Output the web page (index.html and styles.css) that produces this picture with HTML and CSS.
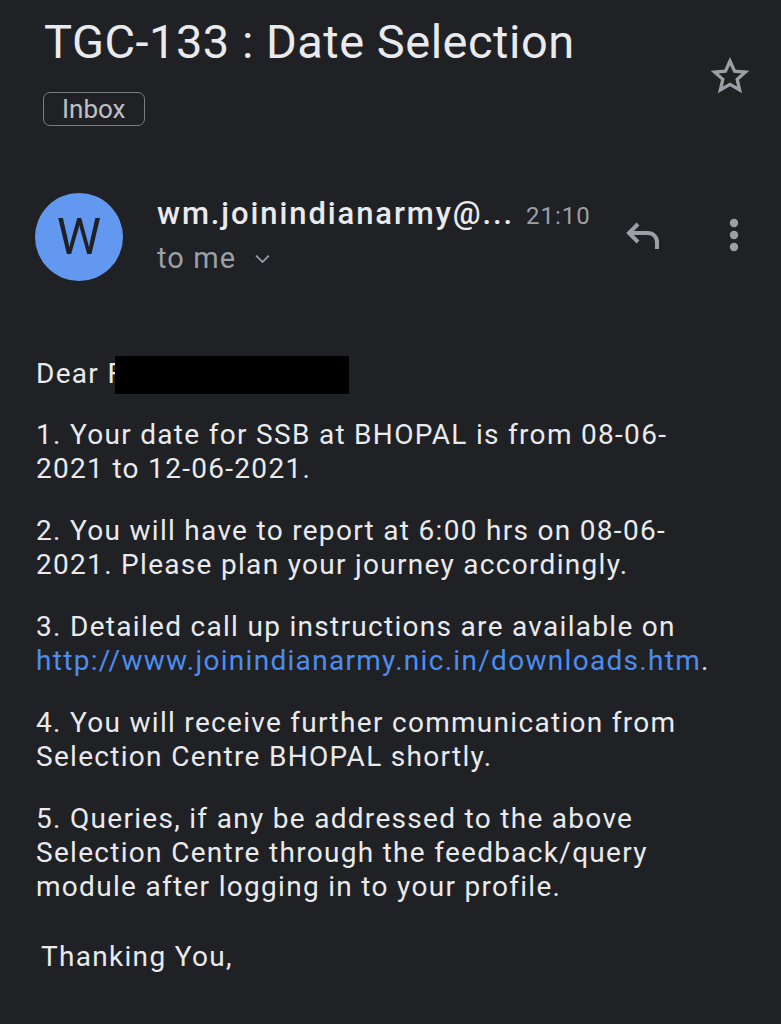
FILE: index.html
```html
<!DOCTYPE html>
<html>
<head>
<meta charset="utf-8">
<link rel="stylesheet" href="styles.css">
</head>
<body>
<div class="page">
  <header class="subject">
    <div class="subject-main">
      <h1 class="title">TGC-133 : Date Selection</h1>
      <span class="chip">Inbox</span>
    </div>
    <svg class="star" viewBox="0 0 24 24" width="42" height="42"><path d="M12 3.5l2.6 5.7 6.2.6-4.7 4.1 1.4 6.1L12 16.8 6.5 20l1.4-6.1-4.7-4.1 6.2-.6z" fill="none" stroke="#9aa0a6" stroke-width="1.9" stroke-linejoin="miter"/></svg>
  </header>

  <section class="sender">
    <div class="avatar">W</div>
    <div class="sender-info">
      <div class="from-line"><span class="from">wm.joinindianarmy@...</span><span class="time">21:10</span></div>
      <div class="to">to me <svg class="chev" viewBox="0 0 12 12" width="17" height="17"><path d="M1.5 4l4.5 4.5 4.5-4.5" fill="none" stroke="#9aa0a6" stroke-width="1.3"/></svg></div>
    </div>
    <div class="actions">
      <svg class="reply" viewBox="0 0 24 24" width="48" height="48"><path d="M9 6.5L4.5 11 9 15.5M4.8 11H14a4.5 4.5 0 0 1 4.5 4.5V19" fill="none" stroke="#9aa0a6" stroke-width="2"/></svg>
      <svg class="more" viewBox="0 0 24 24" width="44" height="44"><circle cx="12" cy="5.5" r="2.3" fill="#9aa0a6"/><circle cx="12" cy="12" r="2.3" fill="#9aa0a6"/><circle cx="12" cy="18.5" r="2.3" fill="#9aa0a6"/></svg>
    </div>
  </section>

  <article class="body">
    <p class="dear">Dear F<span class="redact"></span></p>
    <p>1. Your date for SSB at BHOPAL is from 08-06-<br>2021 to 12-06-2021.</p>
    <p>2. You will have to report at 6:00 hrs on 08-06-<br>2021. Please plan your journey accordingly.</p>
    <p>3. Detailed call up instructions are available on<br><a class="link" href="#">http://www.joinindianarmy.nic.in/downloads.htm</a>.</p>
    <p>4. You will receive further communication from<br>Selection Centre BHOPAL shortly.</p>
    <p>5. Queries, if any be addressed to the above<br>Selection Centre through the feedback/query<br>module after logging in to your profile.</p>
    <p class="thanks">Thanking You,</p>
  </article>
</div>
</body>
</html>
```

FILE: styles.css
```css
html, body {
  margin: 0;
  padding: 0;
  background: #202124;
}
body {
  font-family: Roboto, "Liberation Sans", sans-serif;
  color: #e8eaed;
  width: 781px;
  height: 1024px;
  overflow: hidden;
}
.subject {
  display: flex;
  justify-content: space-between;
  align-items: flex-start;
  padding: 12px 30px 0 44px;
}
.title {
  margin: 0;
  font-weight: 400;
  font-size: 47px;
  line-height: 60px;
  color: #e8eaed;
  letter-spacing: 0.5px;
}
.chip {
  display: inline-block;
  margin-top: 20px;
  margin-left: -1px;
  padding: 0 18px;
  height: 32px;
  line-height: 32px;
  border: 1.5px solid #7a7d82;
  border-radius: 7px;
  font-size: 26px;
  color: #bdc1c6;
}
.star {
  margin-top: 43px;
}
.sender {
  display: flex;
  align-items: flex-start;
  padding: 67px 25px 0 35px;
}
.avatar {
  width: 88px;
  height: 88px;
  border-radius: 50%;
  background: #6398f0;
  color: #202124;
  font-size: 50px;
  line-height: 88px;
  text-align: center;
  flex: none;
}
.sender-info {
  margin-left: 34px;
  flex: 1;
}
.from-line {
  display: flex;
  align-items: baseline;
  padding-top: 3px;
}
.from {
  font-size: 31px;
  font-weight: 500;
  letter-spacing: 1.9px;
  color: #e8eaed;
  line-height: 36px;
}
.time {
  margin-left: 12px;
  font-size: 24px;
  letter-spacing: 1px;
  color: #9aa0a6;
}
.to {
  margin-top: 9px;
  font-size: 29px;
  letter-spacing: 1.1px;
  color: #9aa0a6;
  display: flex;
  align-items: center;
  gap: 18px;
}
.actions {
  display: flex;
  align-items: center;
  gap: 44px;
  margin-top: 18px;
}
.body {
  padding: 76px 0 0 36px;
  font-size: 28px;
  letter-spacing: 1.3px;
  line-height: 34px;
}
.body p {
  margin: 0 0 28px;
}
.dear {
  position: relative;
  margin-bottom: 27px !important;
}
.redact {
  position: absolute;
  left: 79px;
  top: -1px;
  width: 234px;
  height: 38px;
  background: #000;
}
.link {
  color: #4b8ef0;
  text-decoration: none;
}
.thanks {
  padding-left: 5px;
  margin-top: 36px !important;
}
```
